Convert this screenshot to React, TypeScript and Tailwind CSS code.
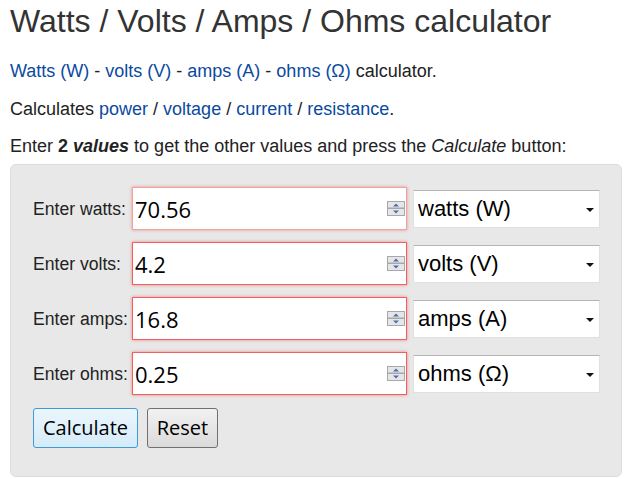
import React from 'react';

const rows = [
  { label: 'Enter watts:', value: '70.56', unit: 'watts (W)', soft: true },
  { label: 'Enter volts:', value: '4.2', unit: 'volts (V)', soft: false },
  { label: 'Enter amps:', value: '16.8', unit: 'amps (A)', soft: false },
  { label: 'Enter ohms:', value: '0.25', unit: 'ohms (Ω)', soft: false },
];

function Spinner() {
  return (
    <svg width="18" height="15" viewBox="0 0 18 15" className="absolute right-[2px] top-[14px]">
      <rect x="0.5" y="0.5" width="17" height="6.5" fill="#e6e6e6" stroke="#a8a8a8" />
      <rect x="0.5" y="7.5" width="17" height="7" fill="#e6e6e6" stroke="#a8a8a8" />
      <path d="M6 5.5 L12 5.5 L9 2.5 Z" fill="#4f6bb8" />
      <path d="M6 9.5 L12 9.5 L9 12.5 Z" fill="#4f6bb8" />
    </svg>
  );
}

function Row({ label, value, unit, soft }: { label: string; value: string; unit: string; soft: boolean }) {
  return (
    <div className="flex items-center">
      <label className="w-[99px] whitespace-nowrap pt-[2px] text-[17.6px] text-[#222]">{label}</label>
      <div className="relative">
        <input
          type="text"
          readOnly
          value={value}
          className={`block h-[43px] w-[275px] bg-white pl-[2px] text-[22px] text-black outline-none font-['Open_Sans',sans-serif] border ${
            soft
              ? 'border-[#f2a0a0] shadow-[0_0_3px_rgba(240,80,80,0.6)]'
              : 'border-[#f06060] shadow-[0_0_3px_rgba(240,60,60,0.6)]'
          }`}
        />
        <Spinner />
      </div>
      <div className="relative ml-[6px]">
        <select
          defaultValue={unit}
          className="block h-[38px] w-[187px] appearance-none border border-[#e0e0e0] border-t-[#b4b4b4] bg-white pl-[4px] text-[22px] text-black outline-none font-['Liberation_Sans',Arial,sans-serif]"
        >
          <option>{unit}</option>
        </select>
        <svg width="8" height="4" viewBox="0 0 8 4" className="pointer-events-none absolute right-[6px] top-[18px]">
          <path d="M0 0 H8 L4 4 Z" fill="#111" />
        </svg>
      </div>
    </div>
  );
}

export default function App() {
  return (
    <main className="min-h-screen bg-white px-[10px] pt-[2px] font-['Liberation_Sans',Arial,sans-serif] text-[#222]">
      <h1 className="whitespace-nowrap text-[32px] leading-[38px] text-[#333]">Watts / Volts / Amps / Ohms calculator</h1>

      <p className="mt-[21px] text-[18px] leading-[20px]">
        <a className="text-[#0b4a9f]">Watts (W)</a> - <a className="text-[#0b4a9f]">volts (V)</a> -{' '}
        <a className="text-[#0b4a9f]">amps (A)</a> - <a className="text-[#0b4a9f]">ohms (Ω)</a> calculator.
      </p>
      <p className="mt-[18px] text-[18px] leading-[20px]">
        Calculates <a className="text-[#0b4a9f]">power</a> / <a className="text-[#0b4a9f]">voltage</a> /{' '}
        <a className="text-[#0b4a9f]">current</a> / <a className="text-[#0b4a9f]">resistance</a>.
      </p>
      <p className="mt-[17px] text-[18px] leading-[20px]">
        Enter <b>2</b> <b><i>values</i></b> to get the other values and press the <i>Calculate</i> button:
      </p>

      <div className="mt-[8px] h-[313px] w-[612px] rounded-[6px] border border-[#dcdcdc] bg-[#e8e8e8] pl-[22px] pt-[22px]">
        <div className="flex flex-col gap-[12px]">
          {rows.map((r) => (
            <Row key={r.label} {...r} />
          ))}
        </div>
        <div className="mt-[13px] flex gap-[9px] font-['Open_Sans',sans-serif] text-[20px] text-black">
          <button className="h-[40px] w-[105px] rounded-[3px] border border-[#3c9ad6] bg-gradient-to-b from-[#ecf6fd] to-[#d4ebf9]">
            Calculate
          </button>
          <button className="h-[40px] w-[71px] rounded-[3px] border border-[#707070] bg-gradient-to-b from-[#f2f2f2] to-[#dadada]">
            Reset
          </button>
        </div>
      </div>
    </main>
  );
}
